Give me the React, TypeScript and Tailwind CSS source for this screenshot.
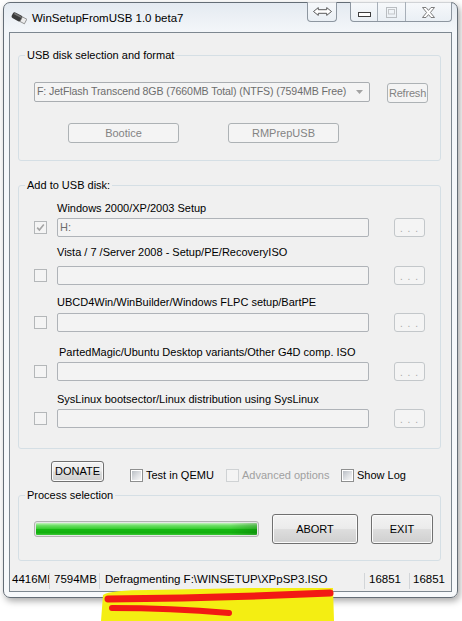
import React from "react";

const font = "font-['Liberation_Sans',Arial,sans-serif]";
const btnOn =
  "flex items-center justify-center rounded-[3px] border border-[#707070] bg-[linear-gradient(to_bottom,#f3f3f3_0%,#ebebeb_48%,#dddddd_52%,#cfcfcf_100%)] shadow-[inset_0_0_0_1px_#fbfbfb] text-[11px] text-black";
const btnOff =
  "flex items-center justify-center rounded-[3px] border border-[#adb2b5] bg-[#f4f4f4] text-[11px] text-[#838383]";

function Box({ kind }: { kind: "on" | "dis" | "dischk" | "faint" }) {
  if (kind === "on") {
    return (
      <span className="block w-[13px] h-[13px] border border-[#8e8f8f] bg-white p-[1px] shrink-0">
        <span className="block w-full h-full bg-[linear-gradient(135deg,#b9bec4_0%,#dfe1e4_55%,#f7f7f7_100%)]" />
      </span>
    );
  }
  if (kind === "faint") {
    return <span className="block w-[13px] h-[13px] border border-[#cfd2d4] bg-[#f4f4f4] shrink-0" />;
  }
  return (
    <span className="relative block w-[13px] h-[13px] border border-[#b4b7b9] bg-[#f4f4f4] shrink-0">
      {kind === "dischk" && (
        <svg width="11" height="11" viewBox="0 0 11 11" className="block">
          <path d="M2.2 5.6 L4.4 8 L8.8 2.6" fill="none" stroke="#a4a4a4" strokeWidth="1.6" />
        </svg>
      )}
    </span>
  );
}

function UsbIcon() {
  return (
    <svg width="16" height="14" viewBox="0 0 16 14" className="block">
      <g transform="rotate(28 8 7)">
        <rect x="0.5" y="3.8" width="10.5" height="6.4" rx="2.2" fill="#3a3a3a" />
        <rect x="1.6" y="4.5" width="8.5" height="1.5" rx="0.7" fill="#8e8e8e" opacity="0.7" />
        <rect x="10.5" y="4.4" width="5" height="5.2" fill="#ececec" stroke="#7a7a7a" strokeWidth="0.7" />
      </g>
    </svg>
  );
}

function Row({
  label,
  labelPad,
  labelMt,
  fieldMt,
  value,
  box,
}: {
  label: string;
  labelPad: string;
  labelMt: string;
  fieldMt: string;
  value?: string;
  box: "dis" | "dischk";
}) {
  return (
    <div>
      <div className={`${labelMt} ${labelPad} text-[11px] leading-[14px] whitespace-nowrap`}>{label}</div>
      <div className={`${fieldMt} flex items-center h-[19px]`}>
        <Box kind={box} />
        <div className="ml-[10px] w-[312px] h-[19px] rounded-[2px] border border-[#afb3b8] bg-[#f3f3f3] pl-[2px] flex items-center text-[11px] text-[#6d6d6d]">
          {value}
        </div>
        <div className="ml-[25px] w-[31px] h-[19px] rounded-[3px] border border-[#c3c7ca] bg-[#f4f4f4] flex items-center justify-center text-[10px] text-[#a8a8a8] tracking-[1px] pt-[2px]">
          . . .
        </div>
      </div>
    </div>
  );
}

export default function App() {
  return (
    <div className={`relative w-[462px] h-[621px] overflow-hidden bg-white text-black ${font}`}>
      <div className="ml-[3px] mt-[2px] w-[455px] h-[596px] flex flex-col rounded-[7px] border border-[#646d76] bg-[linear-gradient(to_bottom,#e4eaf1_0px,#f3f6f9_28px,#f7f9fb_100%)] shadow-[2px_3px_7px_rgba(0,0,0,0.35)]">
        {/* title bar */}
        <div className="h-[29px] flex items-start shrink-0">
          <div className="h-[29px] flex items-center pl-[7px] pt-[1px]">
            <UsbIcon />
            <span className="ml-[5px] text-[11.5px] leading-[14px] text-black">WinSetupFromUSB 1.0 beta7</span>
          </div>
          <div className="ml-auto mr-[5px] -mt-[1px] flex items-start">
            <div className="w-[30px] h-[20px] rounded-b-[4px] border-x border-b border-[#8d96a0] bg-[linear-gradient(to_bottom,rgba(255,255,255,0.7),rgba(232,238,244,0.7))] flex items-center justify-center">
              <svg width="19" height="9" viewBox="0 0 19 9" className="block">
                <path
                  d="M0.5 4.5 L5.3 0.6 L5.3 2.7 L13.7 2.7 L13.7 0.6 L18.5 4.5 L13.7 8.4 L13.7 6.3 L5.3 6.3 L5.3 8.4 Z"
                  fill="#fff"
                  stroke="#4a4a4a"
                  strokeWidth="0.9"
                />
              </svg>
            </div>
            <div className="ml-[13px] w-[102px] h-[20px] flex rounded-b-[4px] border-x border-b border-[#8d96a0] bg-[linear-gradient(to_bottom,rgba(255,255,255,0.7),rgba(232,238,244,0.7))]">
              <div className="w-[27px] h-full border-r border-[#a7afb8] flex items-start justify-center">
                <span className="mt-[10px] block w-[13px] h-[5px] border border-[#3e3e3e] bg-white" />
              </div>
              <div className="w-[28px] h-full border-r border-[#a7afb8] flex items-start justify-center">
                <svg width="11" height="11" viewBox="0 0 11 11" className="block mt-[5px]">
                  <rect x="0.5" y="0.5" width="10" height="10" fill="none" stroke="#b9bdc1" />
                  <rect x="2.5" y="2.5" width="6" height="4.5" fill="none" stroke="#c3c6c9" />
                </svg>
              </div>
              <div className="flex-1 h-full flex items-start justify-center">
                <svg width="13" height="11" viewBox="0 0 13 11" className="block mt-[5px]">
                  <path
                    d="M0.5 0.5 H4 L6.5 3.4 L9 0.5 H12.5 L8.4 5.5 L12.5 10.5 H9 L6.5 7.6 L4 10.5 H0.5 L4.6 5.5 Z"
                    fill="#fff"
                    stroke="#6e6e6e"
                    strokeWidth="0.9"
                  />
                </svg>
              </div>
            </div>
          </div>
        </div>

        {/* client area */}
        <div className="mx-[5px] h-[560px] flex flex-col border border-[#7d8790] bg-[#f0f0f0]">
          {/* group 1 */}
          <fieldset className="ml-[8px] mr-[10px] mt-[15px] min-w-0 rounded-[3px] border border-[#d5dfe5]">
            <legend className="ml-[6px] px-[2px] text-[11px] leading-[14px]">USB disk selection and format</legend>
            <div className="pl-[15px] pt-[20px] pb-[17px]">
              <div className="flex items-start">
                <div className="w-[336px] h-[20px] rounded-[2px] border border-[#a9adb1] bg-[#f4f4f4] flex items-center pl-[2px] text-[10.6px] tracking-[-0.1px] text-[#6d6d6d] whitespace-nowrap overflow-hidden">
                  <span>F: JetFlash Transcend 8GB (7660MB Total) (NTFS) (7594MB Free)</span>
                  <svg width="7" height="4" viewBox="0 0 7 4" className="ml-auto mr-[6px] block shrink-0">
                    <path d="M0 0 H7 L3.5 4 Z" fill="#a3a3a3" />
                  </svg>
                </div>
                <div className={`${btnOff} ml-[17px] mt-[1px] w-[41px] h-[20px] text-[10.5px] tracking-[-0.2px]`}>Refresh</div>
              </div>
              <div className="flex pl-[34px] mt-[20px]">
                <div className={`${btnOff} w-[111px] h-[20px]`}>Bootice</div>
                <div className={`${btnOff} ml-[49px] w-[111px] h-[20px]`}>RMPrepUSB</div>
              </div>
            </div>
          </fieldset>

          {/* group 2 */}
          <fieldset className="ml-[8px] mr-[10px] mt-[17px] min-w-0 rounded-[3px] border border-[#d5dfe5]">
            <legend className="ml-[6px] px-[2px] text-[11px] leading-[14px]">Add to USB disk:</legend>
            <div className="pl-[15px] pb-[20px]">
              <Row label="Windows 2000/XP/2003 Setup" labelPad="pl-[23px]" labelMt="mt-[9px]" fieldMt="mt-[3px]" value="H:" box="dischk" />
              <Row label="Vista / 7 /Server 2008 - Setup/PE/RecoveryISO" labelPad="pl-[23px]" labelMt="mt-[8px]" fieldMt="mt-[7px]" box="dis" />
              <Row label="UBCD4Win/WinBuilder/Windows FLPC setup/BartPE" labelPad="pl-[23px]" labelMt="mt-[10px]" fieldMt="mt-[4px]" box="dis" />
              <Row label="PartedMagic/Ubuntu Desktop variants/Other G4D comp. ISO" labelPad="pl-[25px]" labelMt="mt-[13px]" fieldMt="mt-[3px]" box="dis" />
              <Row label="SysLinux bootsector/Linux distribution using SysLinux" labelPad="pl-[23px]" labelMt="mt-[11px]" fieldMt="mt-[3px]" box="dis" />
            </div>
          </fieldset>

          {/* options row */}
          <div className="mt-[12px] flex items-start h-[21px]">
            <div className={`${btnOn} ml-[41px] w-[53px] h-[21px] border-[#3c3c3c]`}>DONATE</div>
            <div className="ml-[26px] mt-[8px] w-[96px] flex items-center">
              <Box kind="on" />
              <span className="ml-[3px] text-[11px] leading-[13px] whitespace-nowrap">Test in QEMU</span>
            </div>
            <div className="mt-[8px] w-[115px] flex items-center">
              <Box kind="faint" />
              <span className="ml-[3px] text-[11px] leading-[13px] text-[#a0a0a0] whitespace-nowrap">Advanced options</span>
            </div>
            <div className="mt-[8px] flex items-center">
              <Box kind="on" />
              <span className="ml-[3px] text-[11px] leading-[13px] whitespace-nowrap">Show Log</span>
            </div>
          </div>

          {/* group 3 */}
          <fieldset className="ml-[8px] mr-[10px] mt-[6px] min-w-0 rounded-[3px] border border-[#d5dfe5]">
            <legend className="ml-[6px] px-[2px] text-[11px] leading-[14px]">Process selection</legend>
            <div className="pl-[15px] pt-[12px] pb-[16px] flex items-center">
              <div className="w-[225px] h-[16px] rounded-[3px] border border-[#b2b2b2] bg-[#e6e6e6] p-[1px]">
                <div className="h-full rounded-[1px] bg-[linear-gradient(to_right,rgba(0,0,0,0)_88%,rgba(0,70,0,0.25)_100%),linear-gradient(to_bottom,#c2f4bb_0%,#6ade63_22%,#34cc2c_50%,#17b913_52%,#12b00e_80%,#3cc836_100%)]" />
              </div>
              <div className={`${btnOn} ml-[13px] w-[86px] h-[30px]`}>ABORT</div>
              <div className={`${btnOn} ml-[13px] w-[62px] h-[30px]`}>EXIT</div>
            </div>
          </fieldset>

          {/* status bar */}
          <div className="mt-auto h-[22px] flex items-center text-[11.5px] whitespace-nowrap">
            <div className="w-[39px] h-full overflow-hidden pl-[2px] flex items-center">4416MB</div>
            <div className="w-px h-[16px] bg-[#d2d5d8] mt-[2px]" />
            <div className="w-[49px] h-full overflow-hidden pl-[4px] flex items-center">7594MB</div>
            <div className="w-px h-[16px] bg-[#d2d5d8] mt-[2px]" />
            <div className="w-[264px] h-full overflow-hidden pl-[5px] flex items-center">Defragmenting F:\WINSETUP\XPpSP3.ISO</div>
            <div className="w-px h-[16px] bg-[#d2d5d8] mt-[2px]" />
            <div className="w-[44px] h-full overflow-hidden pl-[4px] flex items-center">16851</div>
            <div className="w-px h-[16px] bg-[#d2d5d8] mt-[2px]" />
            <div className="flex-1 h-full overflow-hidden pl-[3px] flex items-center">16851</div>
          </div>
        </div>
      </div>

      {/* highlighter scribble over the screenshot */}
      <svg width="462" height="621" viewBox="0 0 462 621" className="absolute left-0 top-0 pointer-events-none">
        <path
          d="M103 595 Q110 590 150 590 L250 588 L333 588 L334 621 L101 621 Z"
          fill="#f4ee12"
        />
        <path d="M108 599 Q220 598 330 593" fill="none" stroke="#f21a14" strokeWidth="7" strokeLinecap="round" />
        <path d="M112 608 Q170 608 229 613" fill="none" stroke="#f21a14" strokeWidth="6" strokeLinecap="round" />
      </svg>
    </div>
  );
}
